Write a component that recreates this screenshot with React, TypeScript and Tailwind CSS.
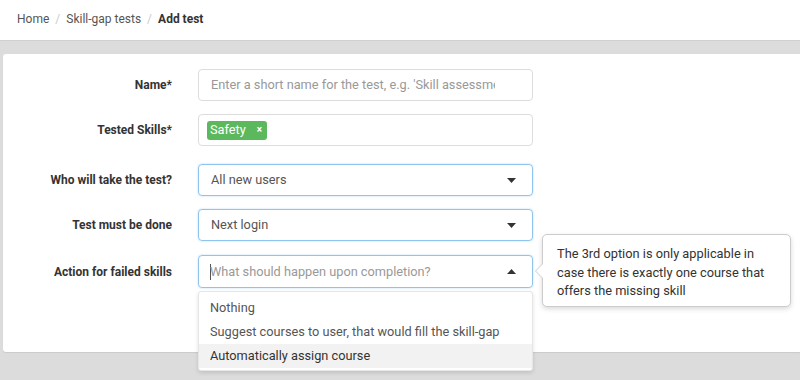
import React from "react";

function Caret({ up = false }: { up?: boolean }) {
  return (
    <svg width="9" height="5" viewBox="0 0 9 5" className="shrink-0">
      {up ? <path d="M0 5 L4.5 0 L9 5 Z" fill="#333" /> : <path d="M0 0 L4.5 5 L9 0 Z" fill="#333" />}
    </svg>
  );
}

function Row({ label, children, mt }: { label: string; children: React.ReactNode; mt: string }) {
  return (
    <div className={`flex items-center ${mt}`}>
      <div className="w-[169px] shrink-0 text-right text-[12px] font-bold text-[#333]">{label}</div>
      <div className="ml-[26px] w-[335px] shrink-0">{children}</div>
    </div>
  );
}

export default function App() {
  return (
    <div className="w-[800px] h-[380px] overflow-hidden bg-[#dcdcdc] relative" style={{ fontFamily: "Roboto, 'Liberation Sans', sans-serif" }}>
      <div className="h-[41px] bg-white border-b border-[#d0d0d0] flex items-center pl-[17px] text-[12px] text-[#555] pb-[2px]">
        <span>Home</span>
        <span className="mx-[6px] text-[#ccc]">/</span>
        <span>Skill-gap tests</span>
        <span className="mx-[6px] text-[#ccc]">/</span>
        <span className="font-bold text-[#333]">Add test</span>
      </div>
      <div className="ml-[3px] mt-[13px] h-[298px] bg-white rounded-l-[3px] shadow-[0_1px_1px_rgba(0,0,0,0.08)] pt-[15px]">
        <Row label="Name*" mt="mt-0">
          <div className="h-[32px] border border-[#ddd] rounded-[4px] flex items-center pl-[12px] pr-[37px] text-[12.75px] text-[#999]">
            <span className="overflow-hidden whitespace-nowrap">Enter a short name for the test, e.g. 'Skill assessment 2024'</span>
          </div>
        </Row>
        <Row label="Tested Skills*" mt="mt-[13px]">
          <div className="h-[32px] border border-[#ddd] rounded-[4px] flex items-center px-[8px]">
            <span className="h-[19px] bg-[#5cb85c] rounded-[3px] text-white text-[12.75px] flex items-center pl-[3px] pr-[5px]">
              Safety<span className="ml-[11px] text-[10px] font-bold leading-none">×</span>
            </span>
          </div>
        </Row>
        <Row label="Who will take the test?" mt="mt-[18px]">
          <div className="h-[32px] border border-[#8fc4ee] rounded-[4px] flex items-center justify-between pl-[12px] pr-[16px] text-[12.75px] text-[#555] shadow-[0_0_2px_rgba(102,175,233,0.5)]">
            <span>All new users</span>
            <Caret />
          </div>
        </Row>
        <Row label="Test must be done" mt="mt-[13px]">
          <div className="h-[32px] border border-[#8fc4ee] rounded-[4px] flex items-center justify-between pl-[12px] pr-[16px] text-[12.75px] text-[#555] shadow-[0_0_2px_rgba(102,175,233,0.5)]">
            <span>Next login</span>
            <Caret />
          </div>
        </Row>
        <Row label="Action for failed skills" mt="mt-[14px]">
          <div className="relative">
            <div className="h-[33px] border border-[#8fc4ee] rounded-[4px] flex items-center justify-between pl-[11px] pr-[16px] text-[12.75px] text-[#999] shadow-[0_0_2px_rgba(102,175,233,0.5)]">
              <span className="flex items-center whitespace-nowrap"><span className="w-px h-[16px] bg-[#555] mr-[-1px]"></span>What should happen upon completion?</span>
              <Caret up />
            </div>
            <div className="absolute left-0 top-[36px] w-[335px] bg-white rounded-[3px] border border-[#e6e6e6] shadow-[0_2px_4px_rgba(0,0,0,0.12)] pt-[4px] pb-[2px] text-[12.75px] text-[#555] z-10 whitespace-nowrap">
              <div className="h-[24px] flex items-center px-[11px]">Nothing</div>
              <div className="h-[24px] flex items-center px-[11px]">Suggest courses to user, that would fill the skill-gap</div>
              <div className="h-[24px] flex items-center px-[11px] bg-[#f2f2f2] text-[#333]">Automatically assign course</div>
            </div>
            <div className="absolute left-[344px] top-[-21px] w-[249px] h-[73px] bg-white border border-[#ccc] rounded-[5px] shadow-[0_2px_5px_rgba(0,0,0,0.15)] z-10 pl-[14px] pr-[20px] pt-[10px] text-[12.8px] leading-[18.5px] text-[#333]">
              The 3rd option is only applicable in case there is exactly one course that offers the missing skill
              <div className="absolute left-[-8px] top-[28px] w-0 h-0 border-y-[8px] border-y-transparent border-r-[8px] border-r-[#ccc]"></div>
              <div className="absolute left-[-7px] top-[29px] w-0 h-0 border-y-[7px] border-y-transparent border-r-[7px] border-r-white"></div>
            </div>
          </div>
        </Row>
      </div>
    </div>
  );
}
